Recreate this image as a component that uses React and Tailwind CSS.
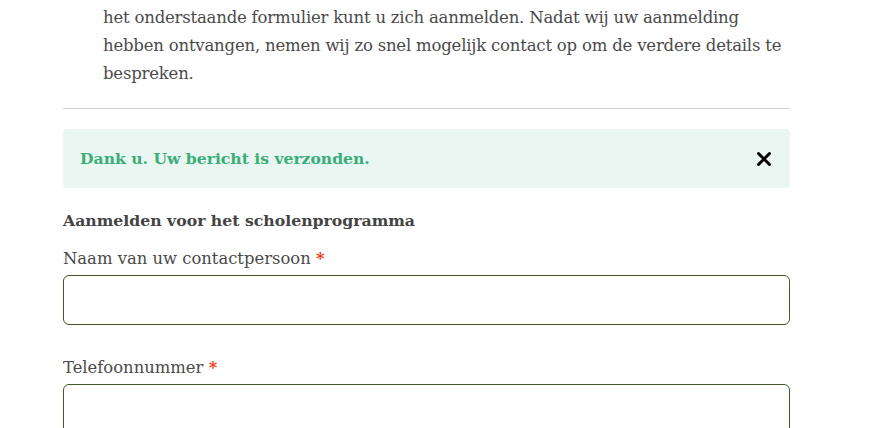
import React from "react";

const Label = ({ children }) => (
  <label className="block text-[16.4px] leading-[26px] text-[#4a4a4a] mb-[3px]">
    {children} <span className="text-[#e8401c] font-bold">*</span>
  </label>
);

export default function App() {
  return (
    <div
      className="w-[877px] h-[428px] overflow-hidden bg-white"
      style={{ fontFamily: '"DejaVu Serif", "Liberation Serif", serif' }}
    >
      <div className="ml-[63px] w-[727px] pt-[4px]">
        <p className="pl-[40px] text-[16.5px] leading-[28px] text-[#4a4a4a] tracking-[-0.2px]">
          het onderstaande formulier kunt u zich aanmelden. Nadat wij uw aanmelding
          <br />
          hebben ontvangen, nemen wij zo snel mogelijk contact op om de verdere details te
          <br />
          bespreken.
        </p>
        <hr className="mt-[20px] border-t border-[#d0d0d0]" />

        <div className="mt-[20px] h-[59px] rounded-[4px] bg-[#eaf6f1] flex items-center justify-between pl-[17px] pr-[16px]">
          <span className="text-[15.6px] font-bold text-[#3aae78]">
            Dank u. Uw bericht is verzonden.
          </span>
          <button className="w-[20px] h-[20px] flex items-center justify-center">
            <svg width="16" height="16" viewBox="0 0 16 16">
              <path d="M2.5 2.5 L13.5 13.5 M13.5 2.5 L2.5 13.5" stroke="#000" strokeWidth="3" strokeLinecap="round" />
            </svg>
          </button>
        </div>

        <h3 className="mt-[20px] text-[15.7px] leading-[26px] font-bold text-[#444]">
          Aanmelden voor het scholenprogramma
        </h3>

        <div className="mt-[12px]">
          <Label>Naam van uw contactpersoon</Label>
          <input className="block w-full h-[50px] rounded-[6px] border border-[#3f5a24] px-3 outline-none" />
        </div>

        <div className="mt-[30px]">
          <Label>Telefoonnummer</Label>
          <input className="block w-full h-[50px] rounded-[6px] border border-[#3f5a24] px-3 outline-none" />
        </div>
      </div>
    </div>
  );
}
